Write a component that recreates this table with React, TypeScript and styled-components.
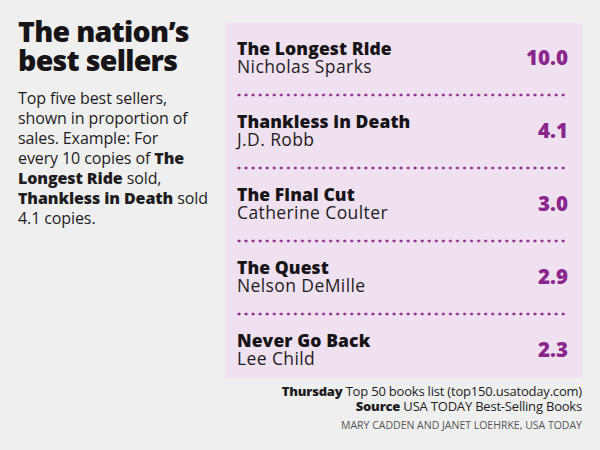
import React from "react";
import styled, { createGlobalStyle } from "styled-components";

const Global = createGlobalStyle`
  html, body { margin: 0; padding: 0; background: #efefef; }
  body { font-family: "Open Sans", Lato, sans-serif; color: #1c1a1c; }
`;

const Page = styled.div`
  width: 600px;
  height: 450px;
  box-sizing: border-box;
  display: flex;
  flex-direction: column;
  padding: 17px 18px 0 18px;
`;

const Main = styled.div`
  display: flex;
  justify-content: space-between;
  align-items: flex-start;
`;

const Intro = styled.div`
  width: 205px;
`;

const Heading = styled.h1`
  margin: 0;
  font-size: 28.5px;
  line-height: 29px;
  font-weight: 800;
  letter-spacing: -0.7px;
  color: #161416;
`;

const Blurb = styled.p`
  margin: 13px 0 0 0;
  font-size: 16px;
  line-height: 20px;
  letter-spacing: -0.1px;
  white-space: nowrap;
  color: #1e1c1e;
  b { font-weight: 800; }
`;

const Panel = styled.div`
  margin-top: 6px;
  width: 357px;
  height: 355px;
  box-sizing: border-box;
  background: #f0e1f0;
  padding: 16px 14px 0 12px;
  display: flex;
  flex-direction: column;
`;

const Row = styled.div`
  display: flex;
  align-items: center;
  justify-content: space-between;
  height: 36px;
`;

const Book = styled.div`
  display: flex;
  flex-direction: column;
`;

const Title = styled.span`
  font-size: 17.5px;
  line-height: 18px;
  font-weight: 800;
  letter-spacing: 0.1px;
  color: #161416;
`;

const Author = styled.span`
  font-size: 17.5px;
  line-height: 18px;
  font-weight: 400;
  letter-spacing: 0.4px;
  color: #1e1c1e;
`;

const Score = styled.span`
  font-size: 20.5px;
  font-weight: 800;
  color: #8b268d;
`;

const Dots = styled.div`
  height: 4px;
  margin: 18px 0 15px 0;
  background-image: radial-gradient(circle, #8e2a8c 1.2px, transparent 1.7px);
  background-size: 7.05px 4px;
  background-position: -1.5px 0;
`;

const Footer = styled.div`
  display: flex;
  flex-direction: column;
  align-items: flex-end;
  padding-top: 6px;
`;

const Note = styled.div`
  font-size: 13px;
  line-height: 15px;
  letter-spacing: -0.2px;
  color: #1e1c1e;
  b { font-weight: 800; }
`;

const Credit = styled.div`
  margin-top: 5px;
  font-size: 10.5px;
  line-height: 12px;
  color: #555;
  letter-spacing: 0;
  text-transform: uppercase;
`;

const books = [
  { title: "The Longest Ride", author: "Nicholas Sparks", score: "10.0" },
  { title: "Thankless in Death", author: "J.D. Robb", score: "4.1" },
  { title: "The Final Cut", author: "Catherine Coulter", score: "3.0" },
  { title: "The Quest", author: "Nelson DeMille", score: "2.9" },
  { title: "Never Go Back", author: "Lee Child", score: "2.3" },
];

export default function App() {
  return (
    <>
      <Global />
      <Page>
        <Main>
          <Intro>
            <Heading>
              The nation’s
              <br />
              best sellers
            </Heading>
            <Blurb>
              Top five best sellers,
              <br />
              shown in proportion of
              <br />
              sales. Example: For
              <br />
              every 10 copies of <b>The</b>
              <br />
              <b>Longest Ride</b> sold,
              <br />
              <b>Thankless in Death</b> sold
              <br />
              4.1 copies.
            </Blurb>
          </Intro>
          <Panel>
            {books.map((b, i) => (
              <React.Fragment key={b.title}>
                {i > 0 && <Dots />}
                <Row>
                  <Book>
                    <Title>{b.title}</Title>
                    <Author>{b.author}</Author>
                  </Book>
                  <Score>{b.score}</Score>
                </Row>
              </React.Fragment>
            ))}
          </Panel>
        </Main>
        <Footer>
          <Note>
            <b>Thursday</b> Top 50 books list (top150.usatoday.com)
          </Note>
          <Note>
            <b>Source</b> USA TODAY Best-Selling Books
          </Note>
          <Credit>Mary Cadden and Janet Loehrke, USA TODAY</Credit>
        </Footer>
      </Page>
    </>
  );
}
